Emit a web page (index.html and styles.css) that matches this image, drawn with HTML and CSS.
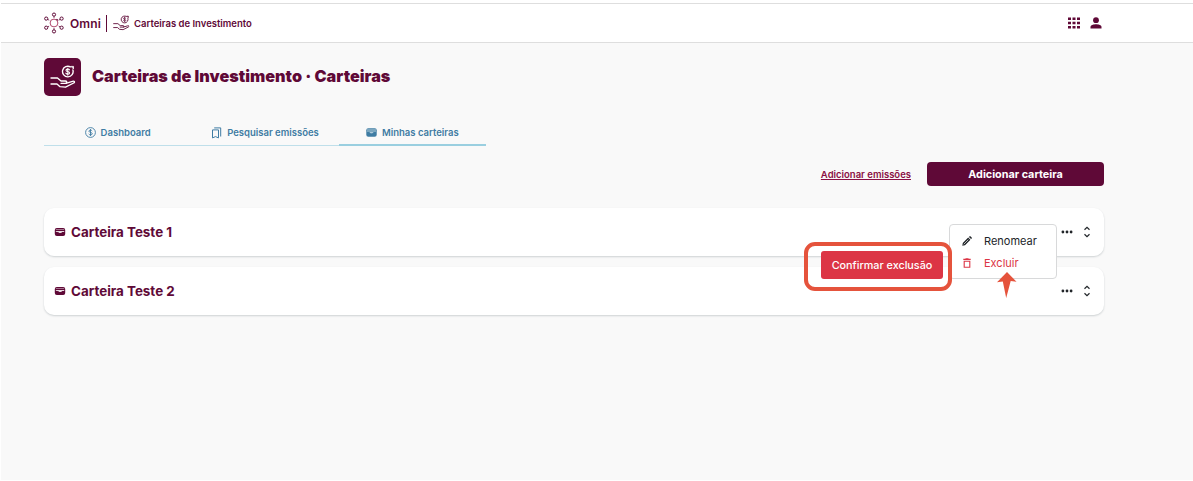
FILE: index.html
```
<!DOCTYPE html>
<html lang="pt-BR">
<head>
  <meta charset="UTF-8">
  <meta name="viewport" content="width=device-width, initial-scale=1.0">
  <title>Carteiras de Investimento</title>
  <link rel="stylesheet" href="styles.css">
</head>
<body>
  <!-- Shared icons -->
  <svg class="sprite" width="0" height="0">
    <symbol id="icon-hand" viewBox="0 0 26 24">
      <g fill="none" stroke="currentColor" stroke-width="1.350" stroke-linecap="round" stroke-linejoin="round">
        <path d="M1 13h6.500l3.500 3h4.500c1.800 0 1.800 2.300 0 2.300h-4.500"/>
        <path d="M15.800 18.300l6.700-2c2-.6 2.600 1 1.200 1.700l-8.200 4.200-5.500-.5-3-2.700H1"/>
        <path d="M20.400 1.900a5.300 5.300 0 1 0 2.500 3.100"/>
        <path d="M21.300 1.400h2.200v2.200z" fill="currentColor" stroke-width="0.800"/>
        <path d="M19.500 4.900c-.8-1.300-3.600-1-3.500.5 0 1.500 3.600 1 3.600 2.500 0 1.500-2.900 1.600-3.800.2M17.800 3.200v6.900" stroke-width="1.100"/>
      </g>
    </symbol>
    <symbol id="icon-wallet" viewBox="0 0 12 10">
      <rect x="0.800" y="1" width="10.400" height="8" rx="2" fill="currentColor"/>
      <path d="M1.800 2.600h8.400" stroke="#fff" stroke-width="0.700" opacity="0.700"/>
      <path d="M1.800 4.100h8.400v.9H8.200c-.8 1.500-3 1.300-3.700.2L1.800 4.700z" fill="#fff" opacity="0.850"/>
    </symbol>
    <symbol id="icon-dots" viewBox="0 0 12 4">
      <circle cx="1.900" cy="2" r="1.400"/>
      <circle cx="6" cy="2" r="1.400"/>
      <circle cx="10.100" cy="2" r="1.400"/>
    </symbol>
    <symbol id="icon-unfold" viewBox="0 0 8 12">
      <path d="M1.500 3.800L4 1.400l2.500 2.400M1.500 8.200L4 10.600l2.500-2.400" fill="none" stroke="currentColor" stroke-width="1.200"/>
    </symbol>
  </svg>

  <div class="app">
    <header class="topbar">
      <div class="brand">
        <svg class="brand-logo" viewBox="0 0 22 22" fill="none" stroke="currentColor" stroke-width="1">
          <circle cx="11" cy="11" r="3.900" stroke="#b0476c"/>
          <path d="M13.800 8.200l.7-1" stroke-width="1.600"/>
          <circle cx="11" cy="2.600" r="1.600"/>
          <circle cx="3.200" cy="6.600" r="1.600"/>
          <circle cx="18.600" cy="6.600" r="1.600"/>
          <circle cx="3.200" cy="15.700" r="1.600"/>
          <circle cx="18.600" cy="15.700" r="1.600"/>
          <circle cx="11" cy="19.400" r="1.600"/>
          <path d="M11 4.200v1.700M11 16v1.800M4.700 7.400l1.500.8M17.100 7.400l-1.500.8M4.700 14.900l1.400-.8M17.100 14.900l-1.400-.8" stroke-width="0.800"/>
        </svg>
        <span class="brand-name">Omni</span>
        <span class="brand-divider"></span>
        <svg class="brand-hand"><use href="#icon-hand"/></svg>
        <span class="brand-product">Carteiras de Investimento</span>
      </div>
      <div class="topbar-actions">
        <svg width="12" height="12" viewBox="0 0 12 12" fill="currentColor">
          <path d="M0 .5h3v2.500H0zM4.500 .5h3v2.500h-3zM9 .5h3v2.500H9zM0 4.700h3v2.500H0zM4.500 4.700h3v2.500h-3zM9 4.700h3v2.500H9zM0 9h3v2.500H0zM4.500 9h3v2.500h-3zM9 9h3v2.500H9z"/>
        </svg>
        <svg width="12" height="12" viewBox="0 0 12 12" fill="currentColor">
          <circle cx="6" cy="3.200" r="2.900"/>
          <path d="M.5 11.500V10C.5 8 3.500 7.200 6 7.200s5.500.8 5.500 2.800v1.500z"/>
        </svg>
      </div>
    </header>

    <main class="page">
      <div class="page-title">
        <div class="page-icon">
          <svg width="26" height="24"><use href="#icon-hand"/></svg>
        </div>
        <h1>Carteiras de Investimento · Carteiras</h1>
      </div>

      <nav class="tabs">
        <a class="tab">
          <svg width="11" height="11" viewBox="0 0 11 11" fill="none" stroke="currentColor">
            <circle cx="5.500" cy="5.500" r="4.900" stroke-width="0.900"/>
            <path d="M7.200 4c-.5-1.100-3.300-1.200-3.300.2 0 1.500 3.400.9 3.400 2.500 0 1.500-3 1.400-3.600.2M5.500 2v7" stroke-width="0.900"/>
          </svg>
          Dashboard
        </a>
        <a class="tab">
          <svg width="11" height="12" viewBox="0 0 11 12" fill="none" stroke="currentColor" stroke-width="1">
            <path d="M1.500 2.900h6v8L4.500 9.600l-3 1.300zM3.200 .9h6.500V9.500"/>
          </svg>
          Pesquisar emissões
        </a>
        <a class="tab active">
          <svg class="tab-wallet" width="11" height="9" viewBox="0 0 11 9">
            <rect x="0.300" y="0.200" width="10.400" height="8.600" rx="2" fill="currentColor"/>
            <path d="M.8 1.700Q1 .7 2 .7h7q1 0 1.200 1v2.300H.8z" fill="#7ba6bf"/>
            <path d="M3.500 4.300c.5 1.300 3.400 1.300 4 0z" fill="#d6e5ee"/>
          </svg>
          Minhas carteiras
        </a>
      </nav>

      <div class="actions">
        <a class="link">Adicionar emissões</a>
        <button class="btn-primary">Adicionar carteira</button>
      </div>

      <section class="wallets">
        <div class="wallet">
          <svg class="wallet-icon"><use href="#icon-wallet"/></svg>
          <h2>Carteira Teste 1</h2>
          <svg class="dots"><use href="#icon-dots"/></svg>
          <svg class="unfold"><use href="#icon-unfold"/></svg>

          <div class="menu">
            <div class="menu-item">
              <svg width="10" height="10" viewBox="0 0 10 10">
                <path d="M.3 9.700l.5-2.700L6.200 1.600l2.200 2.200L3 9.200zM6.900.9l.7-.6q.4-.3.800 0l1.300 1.300q.3.400 0 .8l-.6.700z" fill="currentColor"/>
                <path d="M1.700 8.300l4.700-4.700" stroke="#fff" stroke-width="0.700"/>
              </svg>
              Renomear
            </div>
            <div class="menu-item danger">
              <svg width="10" height="10" viewBox="0 0 10 10" fill="none" stroke="currentColor" stroke-width="1.100">
                <path d="M1.300 1.400h7.400M3.500 .7h3M2.200 3.200h5.600v6.100H2.200z"/>
              </svg>
              Excluir
            </div>
          </div>

          <div class="confirm">
            <button class="btn-danger">Confirmar exclusão</button>
          </div>

          <svg class="arrow" width="20" height="26" viewBox="0 0 20 26">
            <path d="M10 0l9.500 9.800-5.800-.8L9.200 26 5.800 9.500 0 10.200z" fill="#e5533c"/>
          </svg>
        </div>

        <div class="wallet">
          <svg class="wallet-icon"><use href="#icon-wallet"/></svg>
          <h2>Carteira Teste 2</h2>
          <svg class="dots"><use href="#icon-dots"/></svg>
          <svg class="unfold"><use href="#icon-unfold"/></svg>
        </div>
      </section>
    </main>
  </div>
</body>
</html>
```
FILE: styles.css
```
* {
  box-sizing: border-box;
}

body {
  margin: 0;
  background: #fff;
  color: #5f0937;
  font-family: Inter, "Liberation Sans", sans-serif;
}

.sprite {
  position: absolute;
}

.app {
  height: 480px;
  margin-left: 1px;
  padding-top: 3px;
  background: linear-gradient(#fff 3px, #f9f9f9 3px);
}

.topbar {
  display: flex;
  align-items: center;
  justify-content: space-between;
  height: 40px;
  padding: 0 91px 0 42px;
  background: #fff;
  border-top: 1px solid #dedede;
  border-bottom: 1px solid #dedede;
}

.brand {
  display: flex;
  align-items: center;
}

.brand-logo {
  width: 22px;
  height: 22px;
}

.brand-name {
  width: 31px;
  margin-left: 5px;
  font-size: 12px;
  font-weight: 600;
  letter-spacing: 0.1px;
}

.brand-divider {
  width: 1px;
  height: 17px;
  margin: 0 6px 0 5px;
  background: #5f0937;
}

.brand-hand {
  width: 17px;
  height: 16px;
}

.brand-product {
  margin-left: 4px;
  font-size: 9.5px;
  font-weight: 600;
}

.topbar-actions {
  display: flex;
  gap: 10px;
}

.page {
  width: 1060px;
  margin-left: 43px;
  padding-top: 15px;
}

.page-title {
  display: flex;
  align-items: center;
  gap: 11px;
}

.page-icon {
  display: flex;
  align-items: center;
  justify-content: center;
  width: 37px;
  height: 38px;
  border-radius: 5px;
  background: #5f0937;
  color: #fff;
}

h1 {
  margin: 0 0 2px;
  font-size: 16.2px;
  font-weight: 900;
}

.tabs {
  display: flex;
  width: 442px;
  margin-top: 24px;
}

.tab {
  display: flex;
  flex: 1;
  align-items: center;
  justify-content: center;
  gap: 5px;
  height: 26px;
  border-bottom: 1px solid #bfdfea;
  color: #3f7ca3;
  font-size: 9.5px;
  font-weight: 600;
}

.tab.active {
  border-bottom: 2px solid #9acfe0;
}

.actions {
  display: flex;
  align-items: center;
  justify-content: flex-end;
  gap: 16px;
  margin-top: 16px;
}

.link {
  color: #8a0f43;
  font-size: 9.5px;
  font-weight: 600;
  text-decoration: underline;
}

.btn-primary {
  width: 177px;
  height: 24px;
  padding: 0;
  border: none;
  border-radius: 4px;
  background: #5f0937;
  color: #fff;
  font-family: inherit;
  font-size: 10.8px;
  font-weight: 700;
}

.wallets {
  display: flex;
  flex-direction: column;
  gap: 11px;
  margin-top: 22px;
}

.wallet {
  position: relative;
  display: flex;
  align-items: center;
  height: 48px;
  padding: 0 13px 0 10px;
  border-radius: 10px;
  background: #fff;
  box-shadow: 0 1px 2px rgba(30, 50, 60, 0.2);
}

.wallet:first-child {
  z-index: 1;
}

.wallet-icon {
  width: 12px;
  height: 10px;
}

.wallet h2 {
  flex: 1;
  margin: 0 0 0 5px;
  font-size: 13.4px;
  font-weight: 700;
}

.dots {
  width: 12px;
  height: 4px;
  fill: #212529;
}

.unfold {
  width: 8px;
  height: 12px;
  margin-left: 10px;
  color: #212529;
}

/* Options menu opened by the dots button */
.menu {
  position: absolute;
  top: 16px;
  right: 47px;
  width: 108px;
  height: 55px;
  padding: 5px 12px;
  border: 1px solid #d8d9da;
  border-radius: 4px;
  background: #fff;
}

.menu-item {
  display: flex;
  align-items: center;
  gap: 12px;
  height: 22px;
  color: #212529;
  font-size: 11px;
}

.menu-item.danger {
  color: #dc3545;
}

.confirm {
  position: absolute;
  top: 34px;
  right: 152px;
  padding: 5px 5px 8px 13px;
  border: 4px solid #e5533c;
  border-radius: 11px;
}

.btn-danger {
  display: block;
  width: 122px;
  height: 28px;
  padding: 0;
  border: none;
  border-radius: 3px;
  background: #dc3545;
  color: #fff;
  font-family: inherit;
  font-size: 10.8px;
  font-weight: 500;
}

.arrow {
  position: absolute;
  top: 64px;
  right: 87px;
}
```
